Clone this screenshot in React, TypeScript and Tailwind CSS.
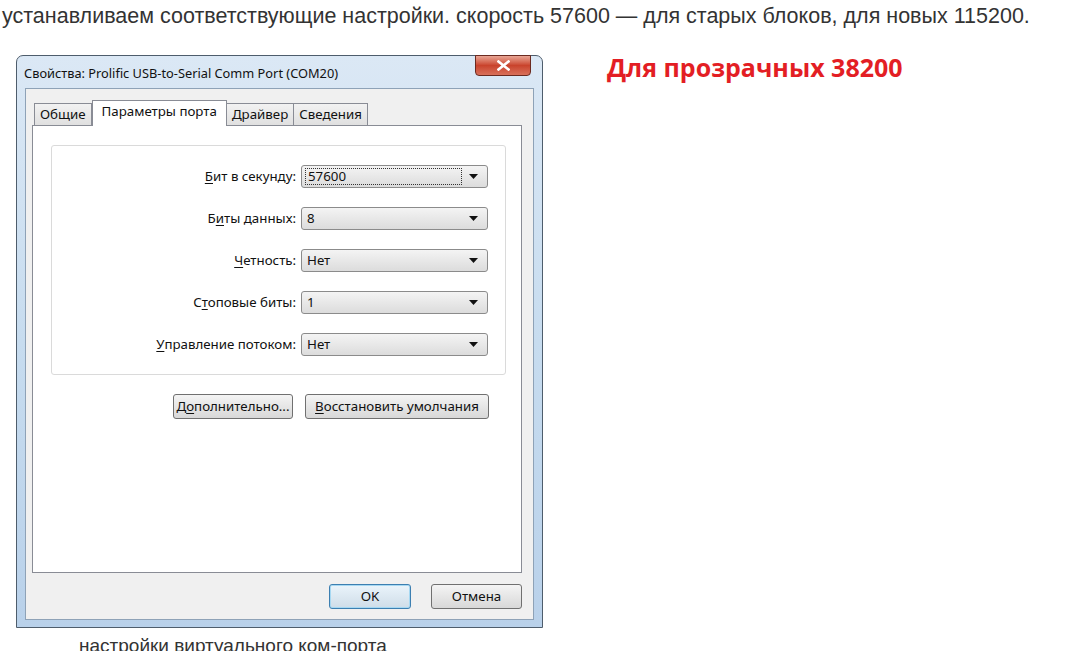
import React from "react";

const ui = { fontFamily: '"Noto Sans", "Open Sans", sans-serif' };

const fields = [
  { pre: "", u: "Б", post: "ит в секунду:", value: "57600", focus: true },
  { pre: "Б", u: "и", post: "ты данных:", value: "8" },
  { pre: "", u: "Ч", post: "етность:", value: "Нет" },
  { pre: "С", u: "т", post: "оповые биты:", value: "1" },
  { pre: "", u: "У", post: "правление потоком:", value: "Нет" },
];

const Combo = ({ value, focus }: { value: string; focus?: boolean }) => (
  <div className="flex h-[23px] w-[187px] items-center rounded-[3px] border border-[#8b8b8b] bg-gradient-to-b from-[#f4f4f4] to-[#dcdcdc] pl-[3px] pr-[9px]">
    <div
      className={
        "flex h-[17px] flex-1 items-center pl-[2px] " +
        (focus ? "border border-dotted border-[#333]" : "")
      }
    >
      {value}
    </div>
    <svg width="9" height="5" viewBox="0 0 9 5" className="ml-[7px]">
      <path d="M0 0H9L4.5 5Z" fill="#111" />
    </svg>
  </div>
);

const Btn = ({ children, w, def }: { children: React.ReactNode; w: string; def?: boolean }) => (
  <div
    className={
      "flex h-[25px] items-center justify-center rounded-[3px] border bg-gradient-to-b " +
      w +
      (def
        ? " border-[#3c7fb1] from-[#eaf4fb] to-[#cfdde8] shadow-[inset_0_0_0_1px_#a6d8f2]"
        : " border-[#707070] from-[#f4f4f4] to-[#d8d8d8]")
    }
  >
    {children}
  </div>
);

const Tab = ({ label, active }: { label: string; active?: boolean }) => (
  <div
    className={
      "flex items-center border border-b-0 border-[#898c95] " +
      (active
        ? "relative z-10 -mb-px h-[26px] bg-white px-[9px] pb-[4px]"
        : "-ml-px mt-[3px] h-[22px] bg-gradient-to-b from-[#f2f2f2] to-[#e0e0e0] px-[5px]")
    }
  >
    {label}
  </div>
);

export default function App() {
  return (
    <div className="min-h-[651px] bg-white" style={{ fontFamily: '"Liberation Sans", Arial, sans-serif' }}>
      <p className="pl-[2px] pt-[4px] text-[21.5px] leading-[24px] text-[#333]">
        устанавливаем соответствующие настройки. скорость 57600 — для старых блоков, для новых 115200.
      </p>

      <div className="mt-[27px] flex items-start">
        {/* dialog window */}
        <div
          className="ml-[16px] flex h-[573px] w-[527px] flex-col rounded-t-[7px] border border-[#4e5d6c] bg-gradient-to-b from-[#dbe8f5] via-[#c7dcef] to-[#b9d1ea] text-[13.3px] text-[#111]"
          style={ui}
        >
          <div className="relative flex h-[32px] items-center pl-[7px] pt-[3px] text-[12.8px]">
            Свойства: Prolific USB-to-Serial Comm Port (COM20)
            <div className="absolute right-[11px] top-[-1px] flex h-[21px] w-[56px] items-center justify-center rounded-b-[4px] border border-[#6b2a20] bg-gradient-to-b from-[#e8a595] via-[#c9432c] to-[#d8705a]">
              <svg width="13" height="11" viewBox="0 0 13 11">
                <path d="M1.5 1.5L11.5 9.5M11.5 1.5L1.5 9.5" stroke="#fff" strokeWidth="2.6" strokeLinecap="square" />
              </svg>
            </div>
          </div>

          <div className="mx-[8px] mb-[7px] flex flex-1 flex-col border border-[#8ea2b7] bg-[#f0f0f0] pl-[6px] pr-[11px] pt-[11px]">
            <div className="flex items-end pl-[3px]">
              <Tab label="Общие" />
              <Tab label="Параметры порта" active />
              <Tab label="Драйвер" />
              <Tab label="Сведения" />
            </div>

            <div className="flex h-[448px] flex-col border border-[#898c95] bg-white pl-[18px] pr-[15px] pt-[19px]">
              <div className="flex flex-col gap-[19px] rounded-[3px] border border-[#dadada] pb-[18px] pl-[3px] pr-[17px] pt-[19px]">
                {fields.map((f) => (
                  <div key={f.post} className="flex h-[23px] items-center justify-end gap-[5px]">
                    <span>
                      {f.pre}
                      <span className="underline underline-offset-2">{f.u}</span>
                      {f.post}
                    </span>
                    <Combo value={f.value} focus={f.focus} />
                  </div>
                ))}
              </div>

              <div className="mt-[19px] flex gap-[12px] pl-[122px]">
                <Btn w="w-[120px]">
                  Д<span className="underline underline-offset-2">о</span>полнительно...
                </Btn>
                <Btn w="w-[184px]">
                  <span className="underline underline-offset-2">В</span>осстановить умолчания
                </Btn>
              </div>
            </div>

            <div className="flex justify-end gap-[20px] pt-[11px]">
              <Btn w="w-[82px]" def>
                OK
              </Btn>
              <Btn w="w-[91px]">Отмена</Btn>
            </div>
          </div>
        </div>

        <div
          className="ml-[64px] mt-[-4px] text-[25px] font-bold leading-[32px] text-[#e31e24]"
          style={{ fontFamily: '"Open Sans", "Noto Sans", sans-serif' }}
        >
          Для прозрачных 38200
        </div>
      </div>

      <p className="pl-[79px] pt-[7px] text-[19px] leading-[22px] text-[#333]">настройки виртуального ком-порта</p>
    </div>
  );
}
